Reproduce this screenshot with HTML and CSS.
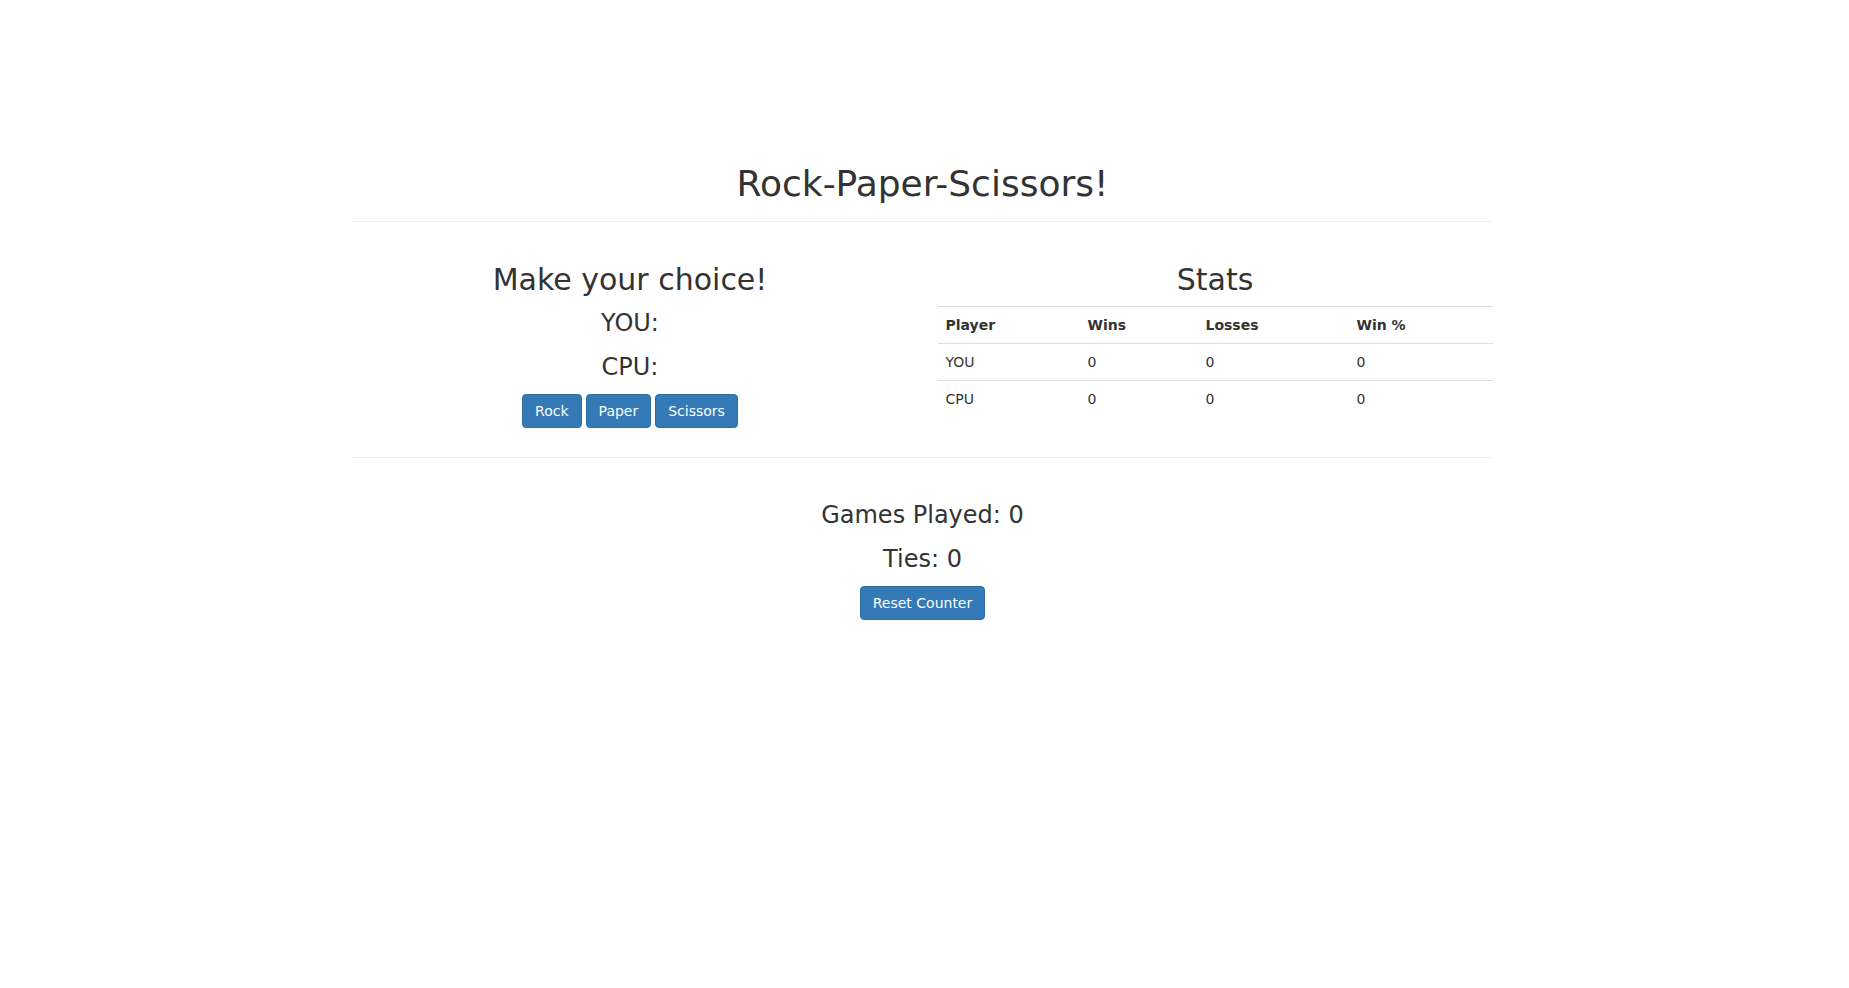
FILE: index.html
```html
<!DOCTYPE html>
<html>
<head>
<meta charset="utf-8">
<title>Rock-Paper-Scissors!</title>
<link rel="stylesheet" href="styles.css">
</head>
<body>
<div class="container">
  <h1 class="title">Rock-Paper-Scissors!</h1>
  <hr class="rule rule-top">
  <div class="row">
    <div class="col col-play">
      <h2 class="heading">Make your choice!</h2>
      <p class="big">YOU:</p>
      <p class="big">CPU:</p>
      <div class="btns">
        <button class="btn">Rock</button>
        <button class="btn">Paper</button>
        <button class="btn">Scissors</button>
      </div>
    </div>
    <div class="col col-stats">
      <h2 class="heading">Stats</h2>
      <table class="stats">
        <colgroup>
          <col class="w1"><col class="w2"><col class="w3"><col class="w4">
        </colgroup>
        <tr><th>Player</th><th>Wins</th><th>Losses</th><th>Win %</th></tr>
        <tr><td>YOU</td><td>0</td><td>0</td><td>0</td></tr>
        <tr><td>CPU</td><td>0</td><td>0</td><td>0</td></tr>
      </table>
    </div>
  </div>
  <hr class="rule rule-mid">
  <div class="summary">
    <p class="big">Games Played: 0</p>
    <p class="big">Ties: 0</p>
    <button class="btn">Reset Counter</button>
  </div>
</div>
</body>
</html>
```
FILE: styles.css
```css
html, body {
  margin: 0;
  padding: 0;
  background: #fff;
}
body {
  font-family: "DejaVu Sans", sans-serif;
  font-size: 14px;
  line-height: 20px;
  color: #333;
  padding-right: 4px;
}
.container {
  width: 1140px;
  margin: 0 auto;
  padding-top: 164px;
}
.title {
  margin: 0;
  font-size: 36px;
  line-height: 40px;
  font-weight: 500;
  text-align: center;
}
.rule {
  height: 0;
  border: 0;
  border-top: 1px solid #eee;
  margin: 0;
}
.rule-top {
  margin-top: 17px;
}
.row {
  display: flex;
  gap: 30px;
  margin-top: 41px;
}
.col {
  width: 555px;
}
.col-play {
  text-align: center;
}
.heading {
  margin: 0 0 10px;
  font-size: 30px;
  line-height: 33px;
  font-weight: 500;
  text-align: center;
}
.big {
  margin: 0 0 10px;
  font-size: 24px;
  line-height: 34px;
}
.btns {
  display: flex;
  justify-content: center;
  gap: 4px;
}
.btn {
  display: inline-block;
  font-family: "DejaVu Sans", sans-serif;
  font-size: 14px;
  line-height: 20px;
  padding: 6px 12px;
  color: #fff;
  background: #337ab7;
  border: 1px solid #2e6da4;
  border-radius: 4px;
  cursor: pointer;
}
.stats {
  width: 555px;
  border-collapse: collapse;
  border-spacing: 0;
  margin-bottom: 20px;
  table-layout: fixed;
}
.w1 { width: 142px; }
.w2 { width: 118px; }
.w3 { width: 151px; }
.w4 { width: 144px; }
.stats th, .stats td {
  padding: 8px;
  line-height: 20px;
  text-align: left;
  border-top: 1px solid #ddd;
  vertical-align: top;
}
.stats th {
  font-weight: bold;
}
.rule-mid {
  margin-top: 20px;
}
.summary {
  text-align: center;
  padding-top: 40px;
}
```
